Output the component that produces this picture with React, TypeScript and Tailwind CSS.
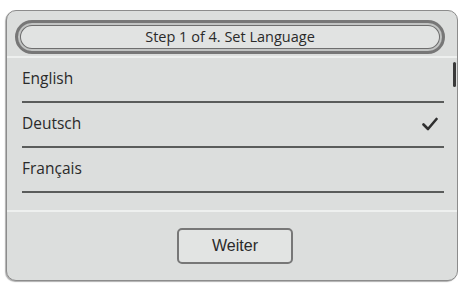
const languages = [
  { label: 'English', selected: false },
  { label: 'Deutsch', selected: true },
  { label: 'Français', selected: false },
];

function Check() {
  return (
    <svg width="16" height="14" viewBox="0 0 16 14" className="mr-[6px]">
      <path d="M1.5 7.5 L6 12 L14.5 2" fill="none" stroke="#2f2f2f" strokeWidth="2.6" strokeLinecap="round" strokeLinejoin="round" />
    </svg>
  );
}

export default function App() {
  return (
    <div className="h-[284px] w-[465px] bg-white pl-[6px] pt-[10px] font-['Open_Sans',sans-serif] text-[#2a2a2a]">
      <div className="flex h-[271px] w-[452px] flex-col overflow-hidden rounded-[10px] border border-[#8c8c8c] bg-[#dcdedd] shadow-[-1px_1px_1px_#b0b0b0]">
        <div className="flex h-[47px] items-start border-b-2 border-[#eef0ef] pl-[8px] pt-[9px]">
          <div className="flex h-[34px] w-[430px] items-center justify-center rounded-full border-[3px] border-[#777] bg-[#e1e3e2] text-[14.5px] shadow-[inset_0_0_0_2px_#c2c4c3,inset_0_0_0_3px_#6e6e6e]">
            Step 1 of 4. Set Language
          </div>
        </div>
        <div className="relative flex h-[152px] flex-col">
          <div className="absolute right-[1px] top-[4px] h-[25px] w-[3px] rounded-full bg-[#3a3a3a]" />
          {languages.map((l) => (
            <div key={l.label} className="ml-[15px] mr-[13px] flex h-[45px] items-center justify-between border-b-2 border-[#5a5c5b] pb-[1px]">
              <span className="text-[15.5px]">{l.label}</span>
              {l.selected ? <Check /> : null}
            </div>
          ))}
        </div>
        <div className="flex flex-1 items-center justify-center border-t-2 border-[#eef0ef] pl-[6px]">
          <button className="flex h-[36px] w-[116px] items-center justify-center rounded-[5px] border-2 border-[#777] bg-[#e2e4e3] font-['Liberation_Sans',sans-serif] text-[16px] text-[#2a2a2a]">
            Weiter
          </button>
        </div>
      </div>
    </div>
  );
}
